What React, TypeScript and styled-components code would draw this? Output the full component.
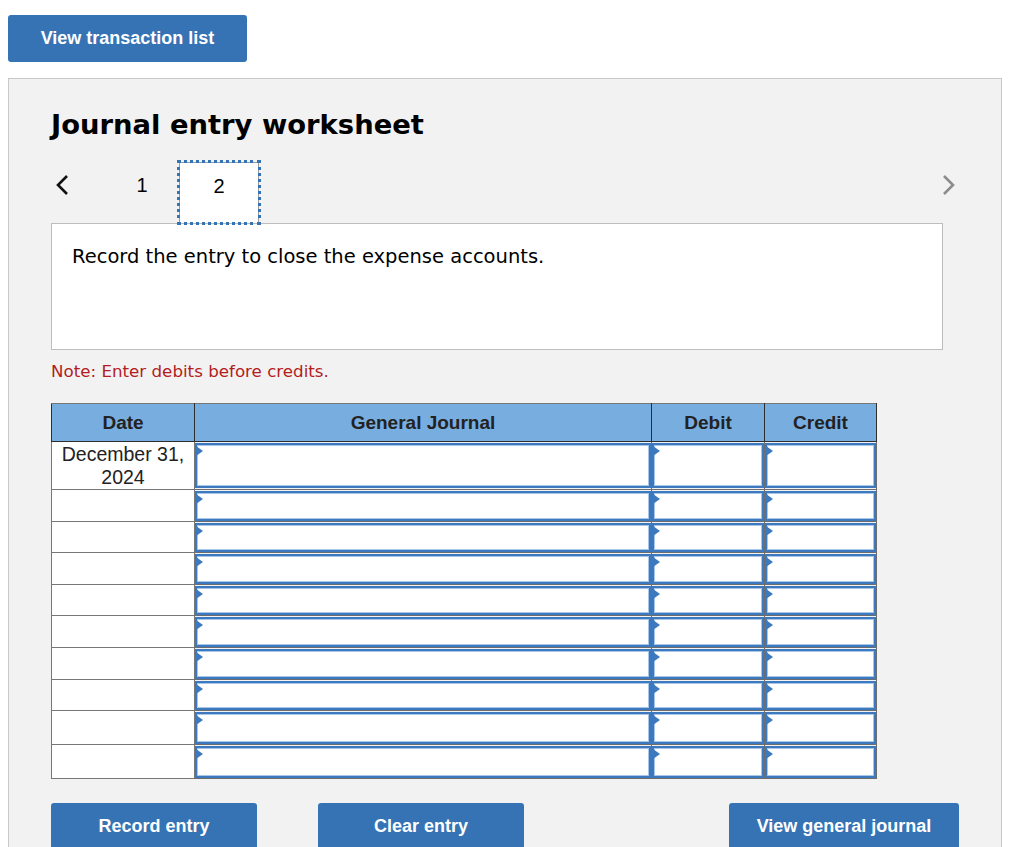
import React from 'react'
import styled, { createGlobalStyle } from 'styled-components'

const GlobalStyle = createGlobalStyle`
  body {
    margin: 8px;
    background: #ffffff;
    font-family: "Liberation Sans", Arial, sans-serif;
    color: #000;
  }
`

const Button = styled.button<{ $w: number }>`
  width: ${p => p.$w}px;
  height: 47px;
  border: none;
  border-radius: 3px;
  background: #3673b5;
  color: #fff;
  font-family: "Liberation Sans", Arial, sans-serif;
  font-weight: bold;
  font-size: 18px;
  padding: 0;
  cursor: pointer;
`

const TopBar = styled.div`
  padding-top: 7px;
`

const Panel = styled.div`
  margin-top: 16px;
  width: 994px;
  box-sizing: border-box;
  background: #f2f2f2;
  border: 1px solid #c8c8c8;
  padding: 28px 42px 0 42px;
  height: 780px;
`

const Title = styled.h2`
  margin: 0;
  font-family: "DejaVu Sans", Verdana, sans-serif;
  font-weight: bold;
  font-size: 27.4px;
  line-height: 35px;
`

const TabRow = styled.div`
  margin-top: 20px;
  display: flex;
  align-items: flex-start;
  height: 61px;
`

const ArrowButton = styled.div`
  width: 54px;
  height: 46px;
  display: flex;
  align-items: center;
  padding-left: 4px;
  box-sizing: border-box;
`

const NextArrow = styled.div`
  margin-left: auto;
  margin-right: 3px;
  height: 46px;
  display: flex;
  align-items: center;
`

const Tab = styled.div<{ $active?: boolean; $w: number }>`
  width: ${p => p.$w}px;
  height: ${p => (p.$active ? '61px' : '46px')};
  box-sizing: border-box;
  display: flex;
  justify-content: center;
  padding-top: 12px;
  font-size: 20px;
  position: relative;
  z-index: 1;
  ${p =>
    p.$active &&
    `
    background: #fff;
    border: 1px solid #9a9a9a;
    border-bottom: none;
    outline: 3px dotted #3673b5;
    outline-offset: -1px;
  `}
`

const PromptBox = styled.div`
  width: 892px;
  height: 127px;
  box-sizing: border-box;
  background: #fff;
  border: 1px solid #bdbdbd;
  padding: 21px 20px;
  font-family: "DejaVu Sans", Verdana, sans-serif;
  font-size: 19.5px;
`

const Note = styled.div`
  margin-top: 11px;
  color: #b21d1d;
  font-family: "DejaVu Sans", Verdana, sans-serif;
  font-size: 16.7px;
`

const Table = styled.table`
  margin-top: 22px;
  border-collapse: collapse;
  width: 825px;
  table-layout: fixed;
  border: 1px solid #777;
`

const Th = styled.th<{ $w: number }>`
  width: ${p => p.$w}px;
  height: 37px;
  padding: 0;
  background: #78ade0;
  border: 1px solid #2e2e2e;
  border-top-color: #777;
  font-size: 19px;
  font-weight: bold;
  color: #222;
`

const Row = styled.tr<{ $h: number }>`
  height: ${p => p.$h}px;
`

const DateCell = styled.td`
  padding: 0;
  background: #fff;
  border: 1px solid #777;
  text-align: center;
  vertical-align: top;
  font-size: 19.5px;
  line-height: 23px;
  padding-top: 1px;
  color: #222;
`

const InputCell = styled.td`
  padding: 0;
  border: 1px solid #6d6d6d;
`

const InputBox = styled.div`
  box-sizing: border-box;
  background: #fff;
  border: 2px solid #3c79bf;
  box-shadow: inset 0 0 0 1px #a7c6ea;
  position: relative;

  &::before {
    content: '';
    position: absolute;
    left: -1px;
    top: 1px;
    border-top: 5px solid transparent;
    border-bottom: 5px solid transparent;
    border-left: 7px solid #3c79bf;
  }
`

const ButtonRow = styled.div`
  margin-top: 24px;
  display: flex;
  align-items: flex-start;
`

const Spacer = styled.div`
  flex: 1;
`

const rows = [47, 32, 31, 32, 31, 32, 32, 31, 34, 34]

function Chevron({ dir, color }: { dir: 'left' | 'right'; color: string }) {
  return (
    <svg width="16" height="22" viewBox="0 0 16 22">
      <polyline
        points={dir === 'left' ? '12,2 3,11 12,20' : '4,2 13,11 4,20'}
        fill="none"
        stroke={color}
        strokeWidth="2.6"
      />
    </svg>
  )
}

export default function App() {
  return (
    <>
      <GlobalStyle />
      <TopBar>
        <Button $w={239}>View transaction list</Button>
      </TopBar>
      <Panel>
        <Title>Journal entry worksheet</Title>
        <TabRow>
          <ArrowButton>
            <Chevron dir="left" color="#111" />
          </ArrowButton>
          <Tab $w={74}>1</Tab>
          <Tab $w={80} $active>
            2
          </Tab>
          <NextArrow>
            <Chevron dir="right" color="#8c8c8c" />
          </NextArrow>
        </TabRow>
        <PromptBox>Record the entry to close the expense accounts.</PromptBox>
        <Note>Note: Enter debits before credits.</Note>
        <Table>
          <thead>
            <tr>
              <Th $w={142}>Date</Th>
              <Th $w={456}>General Journal</Th>
              <Th $w={112}>Debit</Th>
              <Th $w={111}>Credit</Th>
            </tr>
          </thead>
          <tbody>
            {rows.map((h, i) => (
              <Row key={i} $h={h}>
                <DateCell>
                  {i === 0 ? (
                    <>
                      December 31,
                      <br />
                      2024
                    </>
                  ) : null}
                </DateCell>
                <InputCell>
                  <InputBox style={{ height: h - 2 }} />
                </InputCell>
                <InputCell>
                  <InputBox style={{ height: h - 2 }} />
                </InputCell>
                <InputCell>
                  <InputBox style={{ height: h - 2 }} />
                </InputCell>
              </Row>
            ))}
          </tbody>
        </Table>
        <ButtonRow>
          <Button $w={206}>Record entry</Button>
          <Button $w={206} style={{ marginLeft: 61 }}>
            Clear entry
          </Button>
          <Spacer />
          <Button $w={230}>View general journal</Button>
        </ButtonRow>
      </Panel>
    </>
  )
}
